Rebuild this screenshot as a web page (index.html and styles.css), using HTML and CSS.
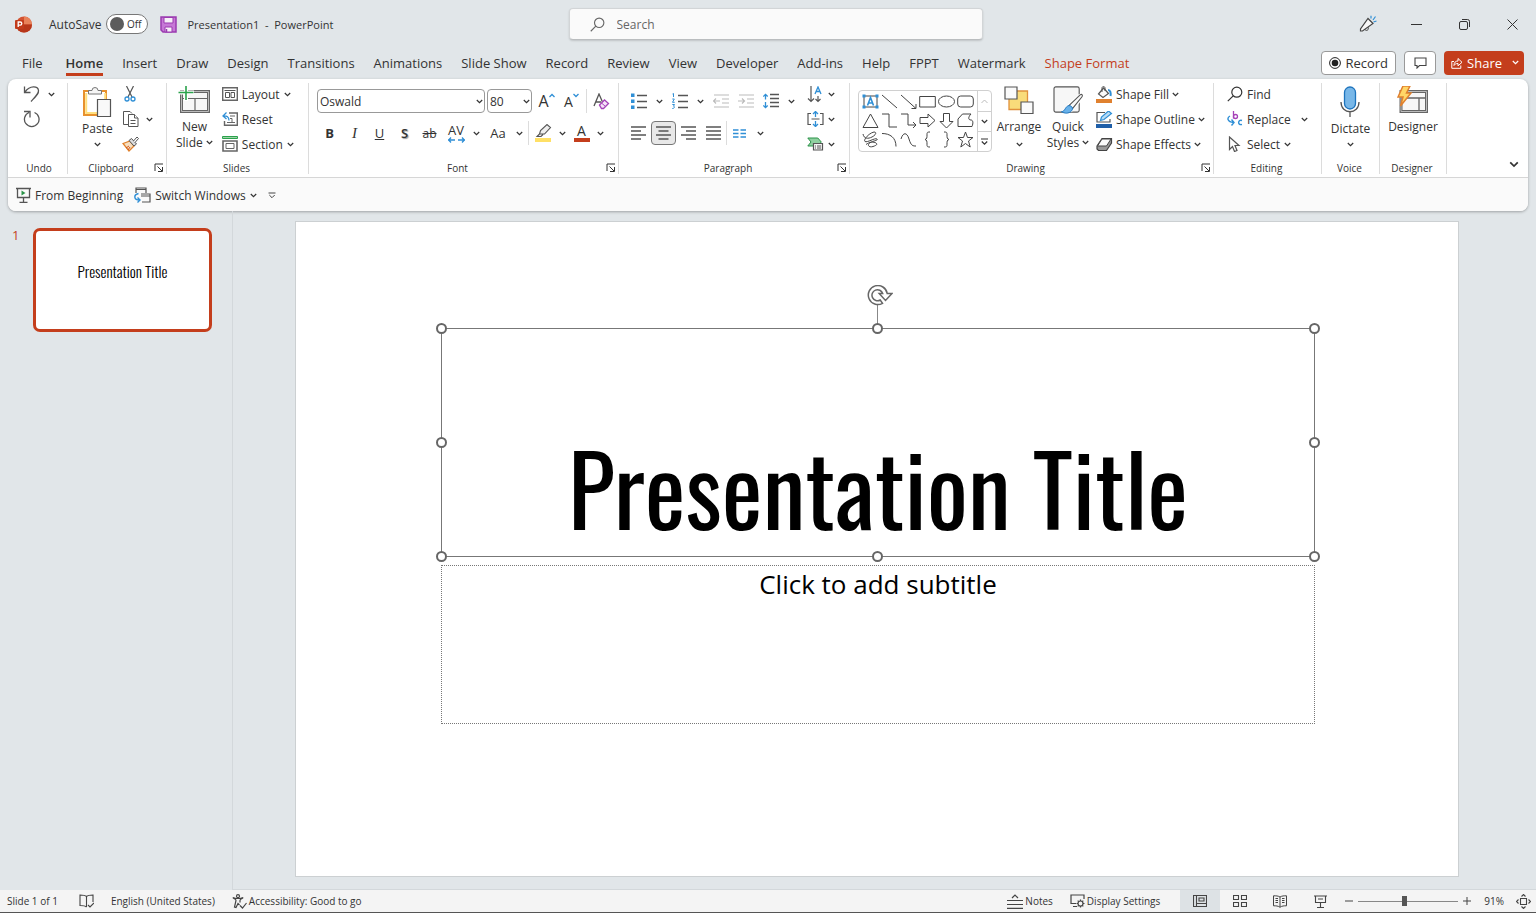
FILE: index.html
```html
<!doctype html>
<html lang="en">
  <head>
    <meta charset="UTF-8" />
    <meta name="viewport" content="width=device-width, initial-scale=1.0" />
    <title>Presentation1 - PowerPoint</title>
    <link rel="stylesheet" href="styles.css">
  </head>
  <body>
    <svg class="sprite" width="0" height="0" aria-hidden="true">
      <symbol id="chevron" viewBox="0 0 7 5"><path d="M.8 1 3.5 3.7 6.2 1" fill="none" stroke="currentColor" stroke-width="1.2" /></symbol>
      <symbol id="launcher" viewBox="0 0 10 10"><path d="M1 8V1h8M3.5 3.5 8 8M8.5 4v4.5H4" fill="none" stroke="currentColor" /></symbol>
      <symbol id="magnifier" viewBox="0 0 16 16"><path d="M6.2 9.8.8 15.2" fill="none" stroke="currentColor" stroke-width="1.2" /><circle cx="9.8" cy="6.2" r="5" fill="none" stroke="currentColor" stroke-width="1.2" /></symbol>
    </svg>

    <header class="titlebar">
      <div class="title-left">
        <svg class="logo" width="17" height="17" viewBox="0 0 17 17">
          <circle cx="9" cy="8.500" r="8" fill="#d35230" />
          <path d="M9 .5a8 8 0 0 1 8 8H9z" fill="#e8825a" />
          <path d="M1 8.500h16a8 8 0 0 1-16 0z" fill="#b7371a" />
          <rect y="4" width="9" height="9" rx="1" fill="#c13b1b" />
          <path d="M3.200 11V6h2a1.500 1.500 0 0 1 0 3.200h-2" fill="none" stroke="#fff" stroke-width="1.300" />
        </svg>
        <label class="autosave">AutoSave
          <span class="switch"><input type="checkbox" /><span>Off</span></span>
        </label>
        <button class="icon-btn" aria-label="Save">
          <svg width="17" height="17" viewBox="0 0 17 17">
            <path d="M1 1h15v15H3l-2-2z" fill="#c678d6" stroke="#9b3bb0" stroke-width="1.500" />
            <path d="M4 1.500h9V7H4zM5 11h7v5H5z" fill="#f6f0f8" stroke="#9b3bb0" />
            <path d="M6.500 13v3" stroke="#9b3bb0" stroke-width="1.500" />
          </svg>
        </button>
        <span class="doc-name">Presentation1&nbsp; -&nbsp; PowerPoint</span>
      </div>
      <label class="search">
        <svg width="15" height="15"><use href="#magnifier" /></svg>
        <input type="text" placeholder="Search" aria-label="Search" />
      </label>
      <div class="window-buttons">
        <button aria-label="Coming soon">
          <svg width="18" height="18" viewBox="0 0 18 18" fill="none" stroke="#444">
            <path d="M9 3.500 14 8.500 3.500 16 1.500 16 1.500 14z" fill="#f8f8f8" stroke-width="1.200" />
            <path d="M6 14.500c1.500 2 4 .5 3.200-2.200" />
            <path d="M12 3.500V.8M14 5l2.500-3.500M14.500 7l3-1" stroke="#2f8fd6" stroke-width="1.200" />
          </svg>
        </button>
        <button aria-label="Minimize"><svg width="11" height="11" viewBox="0 0 11 11"><path d="M0 5.500h11" stroke="#333" /></svg></button>
        <button aria-label="Restore"><svg width="11" height="11" viewBox="0 0 11 11" fill="none" stroke="#333"><rect x=".5" y="2.500" width="8" height="8" rx="1.500" /><path d="M3 .5h5.500a2 2 0 0 1 2 2V8" /></svg></button>
        <button aria-label="Close"><svg width="11" height="11" viewBox="0 0 11 11"><path d="m.5.5 10 10m0-10-10 10" stroke="#333" /></svg></button>
      </div>
    </header>

    <nav class="tabs">
      <a class="file" href="#">File</a>
      <a class="active" href="#">Home</a>
      <a href="#">Insert</a>
      <a href="#">Draw</a>
      <a href="#">Design</a>
      <a href="#">Transitions</a>
      <a href="#">Animations</a>
      <a href="#">Slide Show</a>
      <a href="#">Record</a>
      <a href="#">Review</a>
      <a href="#">View</a>
      <a href="#">Developer</a>
      <a href="#">Add-ins</a>
      <a href="#">Help</a>
      <a href="#">FPPT</a>
      <a href="#">Watermark</a>
      <a class="context" href="#">Shape Format</a>
      <div class="tab-actions">
        <button class="outlined"><svg width="12" height="12" viewBox="0 0 12 12"><circle cx="6" cy="6" r="5.400" fill="none" stroke="#222" /><circle cx="6" cy="6" r="3.300" fill="#222" /></svg>Record</button>
        <button class="outlined comment" aria-label="Comments"><svg width="13" height="12" viewBox="0 0 13 12"><path d="M1 1h11v7.500H5.500L3 11V8.500H1z" fill="none" stroke="#444" stroke-width="1.100" /></svg></button>
        <button class="share">
          <svg width="12" height="12" viewBox="0 0 12 12" fill="none" stroke="#fff"><path d="M3 4.500H.8v6.800h9V8.500M3 8.500c0-3 1.500-4.500 4-4.500V1.500l4 3.800-4 3.500V6.500C5 6.500 4 7 3 8.500z" /></svg>
          Share
          <svg class="chev" width="7" height="5"><use href="#chevron" /></svg>
        </button>
      </div>
    </nav>

    <section class="ribbon">
      <div class="groups">
        <div class="group undo">
          <div class="body">
            <div class="stack">
              <button class="small" aria-label="Undo"><svg width="17" height="18" viewBox="0 0 17 18"><path d="M1.500 1.500v6h6M2 7C7 0 15 1 15.500 5.500c.3 3-2 5-7.500 11" fill="none" stroke="#555" stroke-width="1.300" /></svg><svg class="chev" width="7" height="5"><use href="#chevron" /></svg></button>
              <button class="small" aria-label="Redo"><svg width="17" height="18" viewBox="0 0 17 18"><path d="M1 1.500h6v6M6 2.500a7.300 7.300 0 1 0 5.500 0" fill="none" stroke="#555" stroke-width="1.300" /></svg></button>
            </div>
          </div>
          <div class="caption"><span>Undo</span></div>
        </div>

        <div class="group clipboard">
          <div class="body">
            <button class="large">
              <svg width="30" height="32" viewBox="0 0 30 32">
                <path d="M2 5h22v24H2z" fill="#fff" stroke="#e8912d" stroke-width="2" />
                <path d="M4.200 7v20h19V7" fill="none" stroke="#ffdf7e" stroke-width="2" />
                <path d="M6.500 8V4.500H10a3 3 0 0 1 6 0h3.500V8z" fill="#f5f5f5" stroke="#777" />
                <path d="M15.500 13.500h13v17h-13z" fill="#f9f9f9" stroke="#555" stroke-width="1.200" />
              </svg>
              <span>Paste</span>
              <svg class="chev" width="7" height="5"><use href="#chevron" /></svg>
            </button>
            <div class="stack">
              <button class="small" aria-label="Cut"><svg width="16" height="16" viewBox="0 0 16 16" fill="none"><path d="m4.500 0 5.500 11M11.500 0 6 11" stroke="#555" stroke-width="1.200" /><circle cx="5" cy="13" r="2" stroke="#2f8fd6" stroke-width="1.300" /><circle cx="11" cy="13" r="2" stroke="#2f8fd6" stroke-width="1.300" /></svg></button>
              <button class="small" aria-label="Copy"><svg width="18" height="18" viewBox="0 0 18 18" fill="#fff" stroke="#555"><path d="M6 14.500H1.500v-13H8l2 2" /><path d="M6.500 4.500h6l3.500 3.500v8.500H6.500z" /><path d="M12.500 4.500V8H16M8.500 10.500h5M8.500 13.500h5" /></svg><svg class="chev" width="7" height="5"><use href="#chevron" /></svg></button>
              <button class="small" aria-label="Format Painter"><svg width="17" height="16" viewBox="0 0 17 16"><path d="M1 7.500 8 5l4 5-5 5z" fill="#f6dfc0" stroke="#e0802b" stroke-width="1.300" /><path d="m4 12 3-2M6 14l2-3" stroke="#d3521b" /><path d="m7 4.500 2.500-2 5 5.500-2.500 2z" fill="#ddd" stroke="#555" /><path d="m11.500 5 3.500-4 1.500 1.500L13 6.500" fill="#fff" stroke="#555" /></svg></button>
            </div>
          </div>
          <div class="caption"><span>Clipboard</span><button aria-label="Clipboard options"><svg width="10" height="10"><use href="#launcher" /></svg></button></div>
        </div>

        <div class="group slides">
          <div class="body">
            <button class="large">
              <svg width="32" height="28" viewBox="0 0 32 28">
                <path d="M3.500 5.500h27v20h-27z" fill="#f7f7f7" stroke="#666" stroke-width="3" />
                <path d="M3.500 5.500h27v20h-27z" fill="none" stroke="#bbb" />
                <path d="M5 12.500h24M17 12.500V24" stroke="#666" stroke-width="1.200" />
                <path d="M0 6.500h16M8 0v15" stroke="#fff" stroke-width="4" />
                <path d="M.5 6.500h15M8 0v14" stroke="#2ba24c" stroke-width="1.600" />
              </svg>
              <span>New<br />Slide <svg class="chev" width="7" height="5"><use href="#chevron" /></svg></span>
            </button>
            <div class="stack">
              <button class="small"><svg width="16" height="14" viewBox="0 0 16 14" fill="none" stroke="#555"><path d="M.7.7h14.600v12.600H.7z" stroke="#666" stroke-width="1.400" /><path d="M2.500 3.500h11M3.500 5.500h4v5h-4zM9 5.500h3.500v5H9z" /></svg>Layout<svg class="chev" width="7" height="5"><use href="#chevron" /></svg></button>
              <button class="small"><svg width="16" height="14" viewBox="0 0 16 14" fill="none" stroke="#666"><path d="M7 1h8.300v12.300H2.500V9" stroke-width="1.400" /><path d="M8 4h5M8 6.500h2v4M5 10.500h8" /><path d="M4.500.5 1 4l3.500 3M1 4c4-.5 6 1 6 4.500" stroke="#2f8fd6" stroke-width="1.300" /></svg>Reset</button>
              <button class="small"><svg width="16" height="16" viewBox="0 0 16 16" fill="none" stroke="#666"><path d="M.5.5h15v2H.5z" fill="#9ed3a8" stroke="#2ba24c" /><path d="M1 5h14v10H1z" stroke-width="1.600" /><path d="M4 7.500h8v5H4z" /></svg>Section<svg class="chev" width="7" height="5"><use href="#chevron" /></svg></button>
            </div>
          </div>
          <div class="caption"><span>Slides</span></div>
        </div>

        <div class="group font">
          <div class="body lines">
            <div class="line">
              <span class="combo font-name"><select aria-label="Font"><option>Oswald</option></select><svg class="chev" width="7" height="5"><use href="#chevron" /></svg></span>
              <span class="combo font-size"><select aria-label="Font size"><option>80</option></select><svg class="chev" width="7" height="5"><use href="#chevron" /></svg></span>
              <button class="tool grow" aria-label="Increase font size">A<svg width="6" height="5" viewBox="0 0 6 5"><path d="m.5 4 2.500-2.500L5.500 4" fill="none" stroke="#2f8fd6" stroke-width="1.300" /></svg></button>
              <button class="tool shrink" aria-label="Decrease font size">A<svg width="6" height="5" viewBox="0 0 6 5"><path d="m.5 1 2.500 2.500L5.500 1" fill="none" stroke="#2f8fd6" stroke-width="1.300" /></svg></button>
              <i class="sep"></i>
              <button class="tool" aria-label="Clear formatting"><svg width="17" height="17" viewBox="0 0 17 17" fill="none"><path d="M1 13 6 1l3.500 8M3 9h5" stroke="#555" stroke-width="1.300" /><path d="m6.500 12 5-5 4 3.500-5 5h-2z" fill="#f5e3f8" stroke="#a543b8" stroke-width="1.300" /><path d="m8.500 10 4 3.500" stroke="#a543b8" /></svg></button>
            </div>
            <div class="line">
              <button class="tool"><b>B</b></button>
              <button class="tool italic"><i>I</i></button>
              <button class="tool"><u>U</u></button>
              <button class="tool shadow">S</button>
              <button class="tool strike"><s>ab</s></button>
              <button class="tool spacing" aria-label="Character spacing"><span>AV</span><svg width="17" height="6" viewBox="0 0 17 6"><path d="M0 3h7M3 .5.7 3 3 5.500M10 3h7M14 .5 16.300 3 14 5.500" fill="none" stroke="#2f8fd6" stroke-width="1.300" /></svg></button>
              <button class="drop" aria-label="Character spacing options"><svg class="chev" width="7" height="5"><use href="#chevron" /></svg></button>
              <button class="tool case">Aa</button>
              <button class="drop" aria-label="Change case"><svg class="chev" width="7" height="5"><use href="#chevron" /></svg></button>
              <i class="sep"></i>
              <button class="tool" aria-label="Highlight colour"><svg width="17" height="18" viewBox="0 0 17 18"><path d="m4.500 10 1-3.500 6.500-6 3.500 3-6 6.500zM4.500 10 2 12.500h4L8 10.500" fill="#eee" stroke="#555" stroke-width="1.100" /><path d="M0 14h16v4H0z" fill="#ffe066" /></svg></button>
              <button class="drop" aria-label="More highlight colours"><svg class="chev" width="7" height="5"><use href="#chevron" /></svg></button>
              <button class="tool font-color" aria-label="Font colour"><span>A</span></button>
              <button class="drop" aria-label="More font colours"><svg class="chev" width="7" height="5"><use href="#chevron" /></svg></button>
            </div>
          </div>
          <div class="caption"><span>Font</span><button aria-label="Font options"><svg width="10" height="10"><use href="#launcher" /></svg></button></div>
        </div>

        <div class="group paragraph">
          <div class="body">
            <div class="lines">
              <div class="line">
                <button class="tool" aria-label="Bullets"><svg width="16" height="16" viewBox="0 0 16 16"><path d="M0 .5h3.500V4H0zM0 6.500h3.500V10H0zM0 12.500h3.500V16H0z" fill="#2f8fd6" /><path d="M6 2.500h10M6 8.500h10M6 14.500h10" stroke="#555" stroke-width="1.300" /></svg></button>
                <button class="drop" aria-label="Bullet styles"><svg class="chev" width="7" height="5"><use href="#chevron" /></svg></button>
                <button class="tool" aria-label="Numbering"><svg width="16" height="16" viewBox="0 0 16 16" fill="none"><path d="m.5 1 1-.5V4M.3 6h2L.5 9.300h2.200M.3 11.500h2.200l-1 1.700c1.500 0 1.300 2.300-1.200 2.300" stroke="#2f8fd6" /><path d="M6 2.500h10M6 8.500h10M6 14.500h10" stroke="#555" stroke-width="1.300" /></svg></button>
                <button class="drop" aria-label="Numbering styles"><svg class="chev" width="7" height="5"><use href="#chevron" /></svg></button>
                <button class="tool" aria-label="Decrease indent" disabled><svg width="16" height="14" viewBox="0 0 16 14" fill="none" stroke="#bbb" stroke-width="1.200"><path d="M1 1h15M9 5h7M9 9h7M1 13h15M0 7h7M3 4.500.5 7 3 9.500" /></svg></button>
                <button class="tool" aria-label="Increase indent" disabled><svg width="16" height="14" viewBox="0 0 16 14" fill="none" stroke="#bbb" stroke-width="1.200"><path d="M1 1h15M9 5h7M9 9h7M1 13h15M0 7h7M4 4.500 6.500 7 4 9.500" /></svg></button>
                <button class="tool" aria-label="Line spacing"><svg width="16" height="16" viewBox="0 0 16 16" fill="none"><path d="M2.500 1.500v5M.3 3.500l2.200-2.200 2.200 2.200M2.500 9v5.500M.3 12.500l2.200 2.200 2.200-2.200" stroke="#2f8fd6" stroke-width="1.300" /><path d="M7 1.500h9M7 5.500h9M7 9.500h9M7 13.500h9" stroke="#555" stroke-width="1.300" /></svg></button>
                <button class="drop" aria-label="Line spacing options"><svg class="chev" width="7" height="5"><use href="#chevron" /></svg></button>
              </div>
              <div class="line">
                <button class="tool" aria-label="Align left"><svg width="15" height="14" viewBox="0 0 15 14"><path d="M0 1h15M0 5h10M0 9h15M0 13h10" stroke="#555" stroke-width="1.300" /></svg></button>
                <button class="tool pressed" aria-label="Center"><svg width="15" height="14" viewBox="0 0 15 14"><path d="M0 1h15M2.500 5h10M0 9h15M2.500 13h10" stroke="#555" stroke-width="1.300" /></svg></button>
                <button class="tool" aria-label="Align right"><svg width="15" height="14" viewBox="0 0 15 14"><path d="M0 1h15M5 5h10M0 9h15M5 13h10" stroke="#555" stroke-width="1.300" /></svg></button>
                <button class="tool" aria-label="Justify"><svg width="15" height="14" viewBox="0 0 15 14"><path d="M0 1h15M0 5h15M0 9h15M0 13h15" stroke="#555" stroke-width="1.300" /></svg></button>
                <i class="sep"></i>
                <button class="tool" aria-label="Columns"><svg width="13" height="9" viewBox="0 0 13 9"><path d="M0 1h5.500M7.500 1H13M0 4.500h5.500M7.500 4.500H13M0 8h5.500M7.500 8H13" stroke="#2f8fd6" stroke-width="1.300" /></svg></button>
                <button class="drop" aria-label="Column options"><svg class="chev" width="7" height="5"><use href="#chevron" /></svg></button>
              </div>
            </div>
            <div class="stack">
              <button class="small" aria-label="Text direction"><svg width="17" height="17" viewBox="0 0 17 17" fill="none"><path d="M4 0v15M1 12.500 4 15.500l3-3M11 10v5.500M8.500 13l2.500 2.500 2.500-2.500" stroke="#555" stroke-width="1.200" /><path d="m8 8 3-7 3 7M9 5.500h4" stroke="#2f8fd6" stroke-width="1.300" /></svg><svg class="chev" width="7" height="5"><use href="#chevron" /></svg></button>
              <button class="small" aria-label="Align text"><svg width="17" height="16" viewBox="0 0 17 16" fill="none"><path d="M4 2.500H1v11h3M13 2.500h3v11h-3M4.500 8h8" stroke="#555" stroke-width="1.200" /><path d="M8.500 1v5M6 3l2.500-2.500L11 3M8.500 10v5M6 13l2.500 2.500L11 13" stroke="#2f8fd6" stroke-width="1.300" /></svg><svg class="chev" width="7" height="5"><use href="#chevron" /></svg></button>
              <button class="small" aria-label="Convert to SmartArt"><svg width="17" height="14" viewBox="0 0 17 14"><path d="M.8 1h10l3.500 4-3.500 4h-10L4 5z" fill="#8fd0a0" stroke="#2b9348" /><path d="M6.500 6.500h9v6.500h-9z" fill="#f5f5f5" stroke="#555" stroke-width="1.200" /><path d="M8 9h1m1 0h4M8 11h1m1 0h4" stroke="#555" /></svg><svg class="chev" width="7" height="5"><use href="#chevron" /></svg></button>
            </div>
          </div>
          <div class="caption"><span>Paragraph</span><button aria-label="Paragraph options"><svg width="10" height="10"><use href="#launcher" /></svg></button></div>
        </div>

        <div class="group drawing">
          <div class="body">
            <div class="gallery">
              <div class="shapes">
                <button aria-label="Text box"><svg viewBox="0 0 17 17"><path d="M2 3h13v11H2z" /><path d="m5.500 12.500 3-8 3 8M6.500 10h4" stroke="#2f8fd6" stroke-width="1.600" /><path d="M.5 1.500h3v3h-3zM13.500 1.500h3v3h-3zM.5 12.500h3v3h-3zM13.500 12.500h3v3h-3z" fill="#2f8fd6" stroke="none" /></svg></button>
                <button aria-label="Line"><svg viewBox="0 0 17 17"><path d="m1 2 15 13" /></svg></button>
                <button aria-label="Arrow"><svg viewBox="0 0 17 17"><path d="m1 2 15 13.500M16 11v4.500h-4.500" /></svg></button>
                <button aria-label="Rectangle"><svg viewBox="0 0 17 17"><path d="M.7 3.500h15.600v10.500H.7z" /></svg></button>
                <button aria-label="Oval"><svg viewBox="0 0 17 17"><ellipse cx="8.500" cy="8.500" rx="8" ry="5.500" /></svg></button>
                <button aria-label="Rounded rectangle"><svg viewBox="0 0 17 17"><rect x=".7" y="3" width="15.600" height="11" rx="3" /></svg></button>
                <button aria-label="Triangle"><svg viewBox="0 0 17 17"><path d="m8.500 2 7.500 13.500H1z" /></svg></button>
                <button aria-label="Elbow connector"><svg viewBox="0 0 17 17"><path d="M1 2h7v13h8" /></svg></button>
                <button aria-label="Elbow arrow"><svg viewBox="0 0 17 17"><path d="M1 2h7v11h8M13 10l3 3-3 3" /></svg></button>
                <button aria-label="Right arrow"><svg viewBox="0 0 17 17"><path d="M1 5.500h8V2l7 6.500L9 15v-3.500H1z" /></svg></button>
                <button aria-label="Down arrow"><svg viewBox="0 0 17 17"><path d="M5.500 1.500h6v8H15l-6.500 6.500L2 9.500h3.500z" /></svg></button>
                <button aria-label="Freeform"><svg viewBox="0 0 17 17"><path d="M5.500 2h8.500c-3 3-3 6 0 6 2 0 2.500 3 1 6.500H1V7z" /></svg></button>
                <button aria-label="Scribble"><svg viewBox="0 0 17 17"><path d="M1 3c1 5 5 5 9 3s5-5 2-5C7 2 1 9 3 10.500s10-4 12-2.500-6 2-8 4.500 1 4 4 3 5-2 3-3.500-7-1-10 1.500" /></svg></button>
                <button aria-label="Arc"><svg viewBox="0 0 17 17"><path d="M1 2.500c8 0 14 4 14 13" /></svg></button>
                <button aria-label="Curve"><svg viewBox="0 0 17 17"><path d="M1 8c2-7 6-7 8 0s4 7 7 7" /></svg></button>
                <button aria-label="Left brace"><svg viewBox="0 0 17 17"><path d="M11 1c-3 0-3 .5-3 3s0 4-2 4.500c2 .5 2 2 2 4.500s0 3 3 3" /></svg></button>
                <button aria-label="Right brace"><svg viewBox="0 0 17 17"><path d="M6 1c3 0 3 .5 3 3s0 4 2 4.500c-2 .5-2 2-2 4.500s0 3-3 3" /></svg></button>
                <button aria-label="Star"><svg viewBox="0 0 17 17"><path d="m8.500 1 2 5.500H16l-4.500 3.500 1.700 6-4.700-3.500L3.800 16l1.700-6L1 6.500h5.500z" /></svg></button>
              </div>
              <div class="scroller">
                <button aria-label="Scroll up" disabled><svg width="7" height="5" viewBox="0 0 7 5"><path d="M.5 4 3.500 1l3 3" fill="none" stroke="#bbb" /></svg></button>
                <button aria-label="Scroll down"><svg class="chev" width="7" height="5"><use href="#chevron" /></svg></button>
                <button aria-label="More shapes"><svg width="7" height="8" viewBox="0 0 7 8"><path d="M0 1h7M.8 3.500l2.700 2.700 2.700-2.700" fill="none" stroke="#333" stroke-width="1.200" /></svg></button>
              </div>
            </div>
            <button class="large arrange">
              <svg width="30" height="28" viewBox="0 0 30 28"><path d="M5 5h18.500v18.500H5z" fill="#f9dc7a" stroke="#e0913c" stroke-width="1.300" /><path d="M1 1h12v12H1zM17 16h12v11.500H17z" fill="#fafafa" stroke="#555" stroke-width="1.200" /></svg>
              <span>Arrange</span>
              <svg class="chev" width="7" height="5"><use href="#chevron" /></svg>
            </button>
            <button class="large quick">
              <svg width="32" height="28" viewBox="0 0 32 30"><rect x="1" y="1" width="27" height="27" rx="2" fill="#f7f7f7" stroke="#555" stroke-width="1.200" /><path d="m17 21 11-10 2 2-10 12z" fill="#fff" stroke="#fff" stroke-width="4" /><path d="M17 21 29 9.500c2-1.500 3 .5 2 2L21 24z" fill="#fafafa" stroke="#555" stroke-width="1.200" /><path d="M9 27.500c4 0 4-6 8-6.500 3 0 5 3 3 5.500-3 3.500-8 3-11 1z" fill="#69b2ea" stroke="#1e74bd" /></svg>
              <span>Quick<br />Styles <svg class="chev" width="7" height="5"><use href="#chevron" /></svg></span>
            </button>
            <div class="stack">
              <button class="small"><svg width="17" height="17" viewBox="0 0 17 17"><path d="m7.500 2 5 5.500-5.500 4L2.500 8z" fill="#fafafa" stroke="#555" stroke-width="1.200" /><path d="M6 6V2c0-2 3-2 3 0v3" fill="none" stroke="#555" /><path d="M12 4c2.500 0 3 3 2.500 6" fill="none" stroke="#2f8fd6" stroke-width="2" /><path d="M0 13h16v4H0z" fill="#e0812f" /></svg>Shape Fill<svg class="chev" width="7" height="5"><use href="#chevron" /></svg></button>
              <button class="small"><svg width="17" height="17" viewBox="0 0 17 17"><path d="M9 1.500H1V11h13V8" fill="none" stroke="#555" stroke-width="1.200" /><path d="m4.500 9.500 1-3.500 7-6 3 2.500-7.500 6z" fill="#b9dcf5" stroke="#2f8fd6" stroke-width="1.200" /><path d="M0 13h16v4H0z" fill="#1f5fa8" /></svg>Shape Outline<svg class="chev" width="7" height="5"><use href="#chevron" /></svg></button>
              <button class="small"><svg width="17" height="15" viewBox="0 0 17 15"><path d="M1 9 6 1.500h9.500V6l-5 7.500H2.500L1 12z" fill="#999" stroke="#444" stroke-width="1.200" /><path d="M1.500 9 6 2h9l-4.500 7z" fill="#fafafa" stroke="#444" /></svg>Shape Effects<svg class="chev" width="7" height="5"><use href="#chevron" /></svg></button>
            </div>
          </div>
          <div class="caption"><span>Drawing</span><button aria-label="Drawing options"><svg width="10" height="10"><use href="#launcher" /></svg></button></div>
        </div>

        <div class="group editing">
          <div class="body">
            <div class="stack">
              <button class="small"><svg width="16" height="16"><use href="#magnifier" /></svg>Find</button>
              <button class="small replace"><svg width="16" height="16" viewBox="0 0 16 16" fill="none"><path d="M6.500 0v7.500" stroke="#a543b8" stroke-width="1.300" /><circle cx="8.500" cy="5.500" r="2" stroke="#a543b8" stroke-width="1.300" /><path d="M3 5c-3.500 2-2.500 6 3.500 6.500M4.500 8.500l2.500 3-2.500 3M15 9.500c-4-1.500-5 5 0 4" stroke="#2f8fd6" stroke-width="1.400" /></svg>Replace<svg class="chev" width="7" height="5"><use href="#chevron" /></svg></button>
              <button class="small"><svg width="16" height="16" viewBox="0 0 16 16"><path d="M2.500 1v12.500l3-3 2 5 2.500-1-2-5h4z" fill="#fff" stroke="#555" stroke-width="1.200" /></svg>Select<svg class="chev" width="7" height="5"><use href="#chevron" /></svg></button>
            </div>
          </div>
          <div class="caption"><span>Editing</span></div>
        </div>

        <div class="group voice">
          <div class="body">
            <button class="large">
              <svg width="20" height="32" viewBox="0 0 20 32"><rect x="4.500" y="1" width="11" height="22" rx="5.500" fill="#78b7e8" stroke="#1e74bd" stroke-width="1.300" /><path d="M1 16c0 13 18 13 18 0M10 26v5" fill="none" stroke="#555" stroke-width="1.300" /></svg>
              <span>Dictate</span>
              <svg class="chev" width="7" height="5"><use href="#chevron" /></svg>
            </button>
          </div>
          <div class="caption"><span>Voice</span></div>
        </div>

        <div class="group designer">
          <div class="body">
            <button class="large">
              <svg width="32" height="28" viewBox="0 0 32 28"><path d="M4 5.500h25.500v20H4z" fill="#f7f7f7" stroke="#666" stroke-width="3" /><path d="M4 5.500h25.500v20H4z" fill="none" stroke="#bbb" /><path d="M6 12h22M22 12v12" stroke="#666" stroke-width="1.300" /><path d="M6 0h7L9.500 7H14L3.500 20 6 11H1z" fill="#ffd667" stroke="#e0812f" stroke-width="1.500" /></svg>
              <span>Designer</span>
            </button>
          </div>
          <div class="caption"><span>Designer</span></div>
        </div>

        <button class="collapse" aria-label="Collapse ribbon"><svg width="10" height="7"><use href="#chevron" /></svg></button>
      </div>

      <div class="quick-access">
        <button class="small"><svg width="15" height="16" viewBox="0 0 15 16" fill="none" stroke="#555"><path d="M0 1.500h15M1.500 1.500v9h12v-9M7.500 10.500v4.500M3.500 15.300h8" stroke-width="1.300" /><path d="M5.500 3.500v5l4-2.500z" fill="#2b9348" stroke="none" /></svg>From Beginning</button>
        <button class="small"><svg width="17" height="16" viewBox="0 0 17 16" fill="none" stroke="#555" stroke-width="1.200"><path d="M2 6V1h10v5M2 2.500h10" /><path d="M7 7h9v8H8M7 9h9" /><path d="M4.500 6.500C-1 8 0 13 5.500 13M3.500 10.500 6 13l-2.500 2.500" stroke="#2f8fd6" stroke-width="1.400" /></svg>Switch Windows<svg class="chev" width="7" height="5"><use href="#chevron" /></svg></button>
        <button class="small" aria-label="Customize toolbar"><svg width="8" height="7" viewBox="0 0 8 7"><path d="M.5 1h7M1.300 3l2.700 2.700L6.700 3" fill="none" stroke="#444" /></svg></button>
      </div>
    </section>

    <main class="workspace">
      <aside class="thumbnails">
        <span class="number">1</span>
        <a class="thumb" href="#slide">Presentation Title</a>
      </aside>
      <div class="stage">
        <article class="slide" id="slide">
          <div class="title-box">
            <svg class="rotate" width="28" height="44" viewBox="0 0 28 44" fill="none">
              <path d="M12.500 20v24" stroke="#888" />
              <path d="M17.500 18.300a9.500 9.500 0 1 1 4.700-9.800H27l-6.500 7-6.300-7h3.500a5.500 5.500 0 1 0-2.500 6.500z" fill="#fff" stroke="#666" stroke-width="1.500" />
            </svg>
            <h1>Presentation Title</h1>
            <i class="handle nw"></i><i class="handle n"></i><i class="handle ne"></i>
            <i class="handle w"></i><i class="handle e"></i>
            <i class="handle sw"></i><i class="handle s"></i><i class="handle se"></i>
          </div>
          <p class="subtitle-box">Click to add subtitle</p>
        </article>
      </div>
    </main>

    <footer class="statusbar">
      <span class="slide-count">Slide 1 of 1</span>
      <button aria-label="Spelling"><svg width="15" height="14" viewBox="0 0 15 14" fill="none" stroke="#444" stroke-width="1.100"><path d="M7.500 2.500C6 1 3 1 1 1v10.500c2 0 5 0 6.500 1.500M7.500 2.500C9 1 12 1 14 1v7M7.500 2.500V13M9 11l2 2 4-4" /></svg></button>
      <button class="language">English (United States)</button>
      <button class="accessibility"><svg width="15" height="15" viewBox="0 0 15 15" fill="none" stroke="#444" stroke-width="1.200"><circle cx="6" cy="2.200" r="1.500" /><path d="M1 3.500c0 1.500 3 1 3 3L2.500 13l1.500.5 2-4 1.500 1.500M11 3.500c0 1.500-3 1-3 3v2M1 3.500l3 1h4l3-1M8 11.500l2.500 2.500 4-5" /></svg>Accessibility: Good to go</button>
      <div class="status-right">
        <button class="notes"><svg width="16" height="15" viewBox="0 0 16 15" fill="none" stroke="#444" stroke-width="1.200"><path d="M0 6.500h16M0 10.500h16M0 14.300h16M5 4l3-3 3 3" /></svg>Notes</button>
        <button class="display"><svg width="15" height="14" viewBox="0 0 15 14" fill="none" stroke="#444" stroke-width="1.200"><path d="M6 9.500H1V1h13v4M3 12.500h4" /><circle cx="10.500" cy="9.500" r="2.500" /><path d="M10.500 5.500V7M10.500 12v1.500M6.500 9.500H8M13 9.500h1.500M7.700 6.700l1 1M12.300 11.300l1 1M13.300 6.700l-1 1M8.700 11.300l-1 1" /></svg>Display Settings</button>
        <button class="view current" aria-label="Normal"><svg width="14" height="12" viewBox="0 0 14 12" fill="none" stroke="#444"><path d="M.5.5h13v11H.5zM3.500.5v11M3.500 8.500h10M6 3h5v3H6z" stroke-width="1.100" /></svg></button>
        <button class="view" aria-label="Slide Sorter"><svg width="14" height="12" viewBox="0 0 14 12" fill="none" stroke="#444"><path d="M.5.5h5v4h-5zM8.500.5h5v4h-5zM.5 7.500h5v4h-5zM8.500 7.500h5v4h-5z" stroke-width="1.100" /></svg></button>
        <button class="view" aria-label="Reading View"><svg width="14" height="13" viewBox="0 0 14 13" fill="none" stroke="#444"><path d="M7 2C5 .8 3 .8.5.8v10c2.500 0 4.500 0 6.500 1.500 2-1.500 4-1.500 6.500-1.500v-10C11 .8 9 .8 7 2zv10M2.500 3.500H5M2.500 5.500H5M2.500 7.500H5M9 3.500h2.500M9 5.500h2.500M9 7.500h2.500" /></svg></button>
        <button class="view" aria-label="Slide Show"><svg width="13" height="13" viewBox="0 0 13 13" fill="none" stroke="#444"><path d="M0 1h13M1.500 1v6.500h10V1M6.500 7.500v5M3 12.500h7M4 4h5" stroke-width="1.100" /></svg></button>
        <button class="zoom-step" aria-label="Zoom out"><svg width="8" height="8" viewBox="0 0 8 8"><path d="M0 4h8" stroke="#444" /></svg></button>
        <input type="range" min="0" max="100" value="46" aria-label="Zoom" />
        <button class="zoom-step" aria-label="Zoom in"><svg width="8" height="8" viewBox="0 0 8 8"><path d="M0 4h8M4 0v8" stroke="#444" /></svg></button>
        <button class="percent">91%</button>
        <button aria-label="Fit slide to window"><svg width="15" height="15" viewBox="0 0 15 15" fill="none" stroke="#444" stroke-width="1.100"><path d="M4.500 4.500h6v6h-6zM5.500 2.500l2-2 2 2M5.500 12.500l2 2 2-2M2.500 5.500l-2 2 2 2M12.500 5.500l2 2-2 2" /></svg></button>
      </div>
    </footer>
  </body>
</html>
```

FILE: styles.css
```css
* {
  box-sizing: border-box;
}

body {
  margin: 0;
  min-height: 100vh;
  display: flex;
  flex-direction: column;
  background: #e1e6e9;
  color: #333;
  font-family: "Open Sans", "Noto Sans", sans-serif;
  font-size: 12px;
}

button,
input,
select {
  font: inherit;
  color: inherit;
}

button {
  display: flex;
  align-items: center;
  justify-content: center;
  padding: 0;
  border: none;
  background: none;
  white-space: nowrap;
}

a {
  color: inherit;
  text-decoration: none;
}

svg {
  flex: none;
}

.sprite {
  position: absolute;
}

/* title bar */
.titlebar {
  display: grid;
  grid-template-columns: 1fr 414px 1fr;
  align-items: center;
  height: 48px;
  padding-left: 15px;
}

.title-left {
  display: flex;
  align-items: center;
}

.autosave {
  display: flex;
  align-items: center;
  gap: 5px;
  margin: 0 12px 0 17px;
}

.switch {
  position: relative;
  display: flex;
}

.switch input {
  appearance: none;
  width: 42px;
  height: 20px;
  margin: 0;
  border: 1px solid #777;
  border-radius: 10px;
  background: #fff;
}

.switch input::before {
  content: "";
  display: block;
  width: 14px;
  height: 14px;
  margin: 2px 3px;
  border-radius: 50%;
  background: #5c5c5c;
}

.switch span {
  position: absolute;
  right: 7px;
  top: 3px;
  font-size: 10px;
  line-height: 14px;
}

.doc-name {
  margin-left: 10px;
  font-size: 11px;
}

.search {
  display: flex;
  align-items: center;
  gap: 10px;
  height: 32px;
  padding: 0 20px;
  border: 1px solid #d2d5d7;
  border-bottom-color: #babdbf;
  border-radius: 4px;
  background: #fafafa;
  box-shadow: 0 1px 2px rgba(0, 0, 0, 0.15);
  color: #666;
}

.search input {
  flex: 1;
  border: none;
  outline: none;
  background: none;
}

.search input::placeholder {
  color: #666;
}

.window-buttons {
  display: flex;
  justify-content: flex-end;
}

.window-buttons button {
  width: 48px;
  height: 32px;
}

/* tabs */
.tabs {
  display: flex;
  align-items: center;
  gap: 19px;
  height: 31px;
  padding: 0 12px 0 22px;
  font-size: 13px;
  white-space: nowrap;
}

.tabs a {
  line-height: 20px;
  padding: 2px 0 0;
  border-bottom: 3px solid transparent;
}

.tabs .file {
  margin-right: 4px;
}

.tabs .active {
  font-weight: 600;
  border-color: #c43e1c;
}

.tabs .context {
  color: #c43e1c;
}

.tab-actions {
  display: flex;
  gap: 8px;
  margin: 0 0 2px auto;
}

.tab-actions button {
  gap: 4px;
  height: 24px;
  padding: 0 7px;
  border-radius: 4px;
}

.tab-actions .outlined {
  border: 1px solid #999;
  background: #fff;
}

.tab-actions .comment {
  width: 32px;
}

.tab-actions .share {
  padding-right: 5px;
  background: #c43e1c;
  color: #fff;
}

.share .chev {
  color: #fff;
  margin-left: 6px;
}

/* ribbon */
.ribbon {
  margin: 0 8px;
  border-radius: 8px;
  background: #fff;
  box-shadow: 0 1px 3px rgba(0, 0, 0, 0.3);
}

.groups {
  display: grid;
  grid-template-columns: 60px 99px 142px 310px 231px 364px 108px 58px 67px 1fr;
  padding: 4px 0 3px;
  border-bottom: 1px solid #d6d6d6;
}

.group {
  display: flex;
  flex-direction: column;
  justify-content: space-between;
  height: 91px;
  border-right: 1px solid #dcdcdc;
}

.body {
  display: flex;
}

.chev {
  color: #333;
}

.stack {
  display: flex;
  flex-direction: column;
  align-items: flex-start;
  gap: 3px;
}

.small {
  gap: 4px;
  height: 22px;
}

.large {
  flex-direction: column;
  justify-content: flex-start;
  gap: 3px;
  padding-top: 3px;
  line-height: 16px;
}

.slides .large,
.drawing .large,
.designer .large {
  gap: 5px;
}

.large .chev {
  vertical-align: 2px;
}

.large > .chev {
  margin-top: 2px;
}

.caption {
  display: flex;
  align-items: center;
  padding-right: 2px;
  font-size: 10px;
  line-height: 12px;
}

.caption span {
  flex: 1;
  text-align: center;
}

.undo .body {
  padding-left: 15px;
}

.undo .caption {
  padding: 0 0 0 3px;
}

.undo .small {
  gap: 8px;
}

.clipboard .body {
  gap: 9px;
  padding-left: 14px;
}

.clipboard .small {
  gap: 6px;
}

.slides .body {
  gap: 9px;
  padding-left: 9px;
}

.lines {
  display: flex;
  flex-direction: column;
  gap: 8px;
  padding-top: 6px;
}

.line {
  display: flex;
  align-items: center;
  height: 24px;
}

.font .lines {
  padding-left: 8px;
}

.tool {
  flex: none;
  width: 25px;
  height: 24px;
  font-size: 13px;
}

.drop {
  flex: none;
  width: 16px;
  height: 24px;
}

.font .drop {
  width: 13px;
}

.sep {
  flex: none;
  width: 1px;
  height: 24px;
  background: #dcdcdc;
}

.combo {
  position: relative;
  display: flex;
  margin-right: 2px;
}

.combo select {
  appearance: none;
  width: 100%;
  height: 24px;
  padding: 0 2px;
  border: 1px solid #999;
  border-radius: 4px;
  background: #fff;
}

.combo svg {
  position: absolute;
  right: 2px;
  top: 10px;
}

.font-name {
  width: 168px;
}

.font-size {
  width: 45px;
}

.grow {
  font-size: 16px;
}

.grow svg,
.shrink svg {
  align-self: flex-start;
  margin-top: 4px;
}

.shrink {
  font-size: 14px;
}

.italic {
  font-family: "Liberation Serif", serif;
  font-size: 15px;
}

.shadow {
  font-weight: 600;
  text-shadow: 1px 1px 1px #999;
}

.strike {
  font-size: 12px;
}

.spacing {
  width: 28px;
  flex-direction: column;
  line-height: 14px;
}

.case {
  width: 30px;
}

.font .sep {
  margin: 0 2px;
}

.font-color span {
  width: 16px;
  border-bottom: 4px solid #c43e1c;
  font-size: 14px;
  line-height: 14px;
}

.paragraph .body {
  gap: 8px;
  padding-left: 7px;
}

.pressed {
  border: 1px solid #777;
  border-radius: 4px;
  background: #e8e8e8;
}

.drawing .body {
  padding-left: 8px;
}

.gallery {
  display: flex;
  height: 62px;
  margin-top: 7px;
  border: 1px solid #d0d0d0;
  border-radius: 4px;
}

.shapes {
  display: grid;
  grid-template-columns: repeat(6, 19px);
  grid-template-rows: repeat(3, 19px);
  padding: 1px 2px;
}

.shapes svg {
  width: 17px;
  height: 17px;
  fill: none;
  stroke: #444;
}

.scroller {
  display: grid;
  grid-template-rows: repeat(3, 1fr);
  width: 14px;
  border-left: 1px solid #d0d0d0;
}

.scroller button + button {
  border-top: 1px solid #d0d0d0;
}

.arrange {
  width: 54px;
}

.quick {
  width: 44px;
  margin-right: 6px;
}

.drawing .stack .small {
  gap: 3px;
}

.editing .body {
  padding-left: 13px;
}

.replace .chev {
  margin-left: 6px;
}

.voice .body,
.designer .body {
  justify-content: center;
}

.collapse {
  align-self: end;
  justify-self: end;
  margin: 0 9px 6px 0;
}

.quick-access {
  display: flex;
  align-items: center;
  gap: 11px;
  height: 33px;
  padding: 1px 0 0 8px;
  border-radius: 0 0 8px 8px;
  background: #fafafa;
}

/* workspace */
.workspace {
  flex: 1;
  display: flex;
}

.thumbnails {
  display: flex;
  align-items: flex-start;
  width: 233px;
  padding: 17px 20px 0 12px;
  border-right: 1px solid #d3d8db;
}

.number {
  width: 21px;
  font-size: 13px;
  line-height: 14px;
  color: #c43e1c;
}

.thumb {
  flex: 1;
  aspect-ratio: 179 / 104;
  padding-top: 29px;
  border: 3px solid #c43e1c;
  border-radius: 7px;
  background: #fff;
  color: #000;
  font-size: 15px;
  font-weight: 300;
  line-height: 22px;
  text-align: center;
}

.thumb,
.slide h1 {
  font-family: "Oswald", "Roboto Condensed", "Liberation Sans Narrow", "Liberation Sans", sans-serif;
}

.stage {
  flex: 1;
  display: flex;
  padding: 10px 77px 12px 62px;
  border-bottom: 1px solid #d3d8db;
}

.slide {
  flex: 1;
  padding: 106px 143px 0 145px;
  border: 1px solid #ccd0d2;
  background: #fff;
  color: #000;
}

.title-box {
  position: relative;
  display: flex;
  align-items: flex-end;
  justify-content: center;
  height: 229px;
  padding-bottom: 6px;
  border: 1px solid #777;
}

.slide h1 {
  margin: 0;
  font-size: 97px;
  font-weight: 400;
  line-height: 128px;
  white-space: nowrap;
}

.handle {
  position: absolute;
  width: 11px;
  height: 11px;
  margin: -6px;
  border: 2px solid #666;
  border-radius: 50%;
  background: #fff;
}

.nw, .w, .sw { left: 0; }
.n, .s { left: 50%; }
.ne, .e, .se { right: 0; }
.nw, .n, .ne { top: 0; }
.w, .e { top: 50%; }
.sw, .s, .se { bottom: 0; }

.rotate {
  position: absolute;
  left: calc(50% - 13px);
  bottom: 100%;
}

.subtitle-box {
  height: 159px;
  margin: 8px 0 0;
  border: 1px dotted #777;
  font-size: 26px;
  line-height: 36px;
  text-align: center;
}

/* status bar */
.statusbar {
  display: flex;
  align-items: center;
  height: 23px;
  padding: 0 5px 0 7px;
  border-bottom: 1px solid #555;
  background: #f4f4f4;
  font-size: 10px;
}

.slide-count {
  margin-right: 21px;
}

.language {
  margin: 0 17px;
}

.status-right {
  display: flex;
  align-items: center;
  margin-left: auto;
}

.statusbar button {
  gap: 2px;
  height: 22px;
}

.display {
  margin: 0 20px 0 17px;
}

.statusbar .view {
  width: 40px;
}

.statusbar .current {
  background: #dde2e5;
}

.zoom-step {
  width: 18px;
}

.status-right input {
  appearance: none;
  width: 100px;
  height: 10px;
  margin: 0;
  background: linear-gradient(#888, #888) center / 100% 1px no-repeat;
}

.status-right input::-webkit-slider-thumb {
  appearance: none;
  width: 5px;
  height: 10px;
  background: #555;
}

.percent {
  margin: 0 12px 0 8px;
}
```
